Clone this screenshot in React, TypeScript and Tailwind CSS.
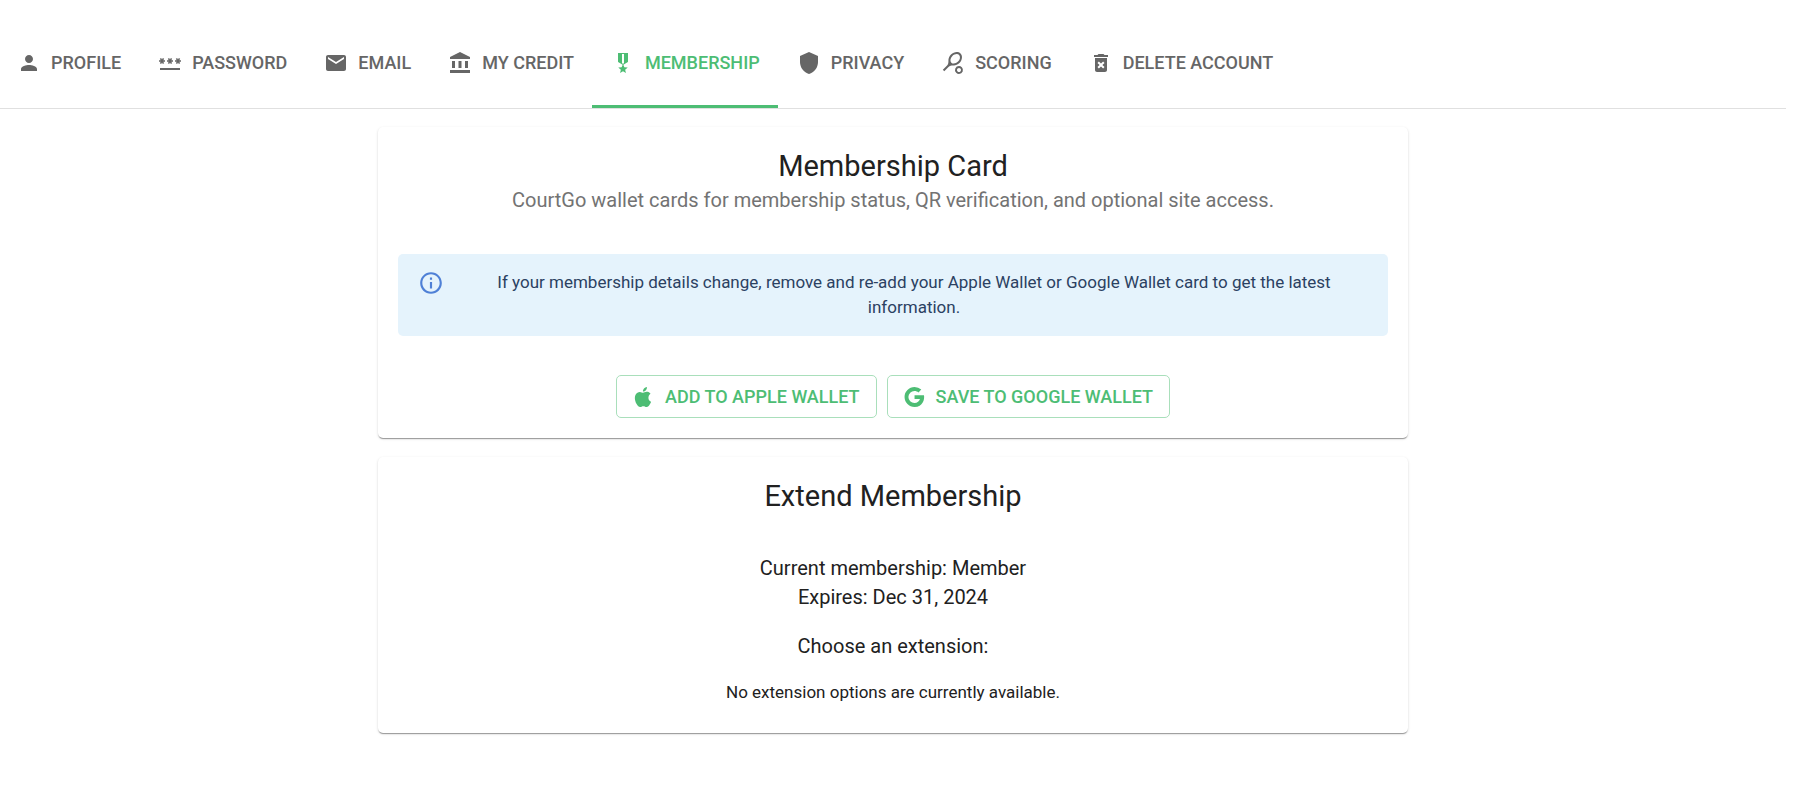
import { useState } from 'react';
import type { ReactNode } from 'react';
import {
  MdAccountBalance,
  MdDeleteForever,
  MdEmail,
  MdInfoOutline,
  MdMilitaryTech,
  MdPassword,
  MdPerson,
  MdShield,
  MdSportsTennis,
} from 'react-icons/md';

const tabs = [
  { id: 'profile', label: 'Profile', Icon: MdPerson },
  { id: 'password', label: 'Password', Icon: MdPassword },
  { id: 'email', label: 'Email', Icon: MdEmail },
  { id: 'credit', label: 'My Credit', Icon: MdAccountBalance },
  { id: 'membership', label: 'Membership', Icon: MdMilitaryTech },
  { id: 'privacy', label: 'Privacy', Icon: MdShield },
  { id: 'scoring', label: 'Scoring', Icon: MdSportsTennis },
  { id: 'delete', label: 'Delete Account', Icon: MdDeleteForever },
];

function AppleIcon() {
  return (
    <svg viewBox="0 0 24 24" className="size-6" fill="currentColor" aria-hidden="true">
      <path d="M18.71 19.5c-.83 1.24-1.71 2.45-3.05 2.47-1.34.03-1.77-.79-3.29-.79-1.53 0-2 .77-3.27.82-1.31.05-2.3-1.32-3.14-2.53C4.25 17 2.94 12.45 4.7 9.39c.87-1.52 2.43-2.48 4.12-2.51 1.28-.02 2.5.87 3.29.87.78 0 2.26-1.07 3.81-.91.65.03 2.47.26 3.64 1.98-.09.06-2.17 1.28-2.15 3.81.03 3.02 2.65 4.03 2.68 4.04-.03.07-.42 1.44-1.38 2.83M13 3.5c.73-.83 1.94-1.46 2.94-1.5.13 1.17-.34 2.35-1.04 3.19-.69.85-1.83 1.51-2.95 1.42-.15-1.15.41-2.35 1.05-3.11z" />
    </svg>
  );
}

function GoogleIcon() {
  return (
    <svg viewBox="0 0 24 24" className="size-6" fill="currentColor" aria-hidden="true">
      <path d="M12.545 10.239v3.821h5.445c-.712 2.315-2.647 3.972-5.445 3.972a6.033 6.033 0 1 1 0-12.064c1.498 0 2.866.549 3.921 1.453l2.814-2.814A9.969 9.969 0 0 0 12.545 2C7.021 2 2.543 6.477 2.543 12s4.478 10 10.002 10c8.396 0 10.249-7.85 9.426-11.748z" />
    </svg>
  );
}

function Card({ title, children }: { title: string; children: ReactNode }) {
  return (
    <section className="rounded-[5px] bg-white p-5 text-center shadow-[0_2px_1px_-1px_rgba(0,0,0,0.24),0_1px_1px_0_rgba(0,0,0,0.14),0_1px_3px_0_rgba(0,0,0,0.12)]">
      <h2 className="text-[29px] leading-[39px]">{title}</h2>
      {children}
    </section>
  );
}

function WalletButton({ icon, children }: { icon: ReactNode; children: ReactNode }) {
  return (
    <button
      type="button"
      className="flex h-[43px] items-center gap-2.5 rounded-[5px] border border-[#a9dfbb] pr-4 pl-3.5 text-[18px] font-medium text-[#4dbd74] uppercase transition-colors hover:bg-[#4dbd74]/5"
    >
      {icon}
      {children}
    </button>
  );
}

export default function App() {
  const [active, setActive] = useState('membership');

  return (
    <div className="min-h-screen bg-white pt-5 pr-3.5 font-[Roboto,sans-serif] text-[#212121]">
      <div role="tablist" className="flex border-b border-[#e0e0e0]">
        {tabs.map(({ id, label, Icon }) => (
          <button
            key={id}
            type="button"
            role="tab"
            aria-selected={active === id}
            onClick={() => setActive(id)}
            className={`flex h-[88px] items-center gap-2.5 border-b-3 pr-[18px] pl-[19px] text-[18px] font-medium whitespace-nowrap uppercase first:pl-[17px] ${
              active === id ? 'border-[#4dbd74] text-[#4dbd74]' : 'border-transparent text-[#666666]'
            }`}
          >
            <Icon className="size-6" />
            {label}
          </button>
        ))}
      </div>

      <main className="mx-auto mt-[18px] flex max-w-[1030px] flex-col gap-[19px]">
        <Card title="Membership Card">
          <p className="text-[20px] leading-[29px] text-[#737373]">
            CourtGo wallet cards for membership status, QR verification, and optional site access.
          </p>
          <div role="alert" className="mt-[39px] flex gap-4 rounded-[5px] bg-[#e5f3fc] px-5 py-4 text-[17px] leading-[25px] text-[#2b4162]">
            <MdInfoOutline className="size-[26px] shrink-0 text-[#4f80d6]" />
            <p className="grow">
              If your membership details change, remove and re-add your Apple Wallet or Google Wallet card to get the
              latest information.
            </p>
          </div>
          <div className="mt-[39px] flex justify-center gap-2.5">
            <WalletButton icon={<AppleIcon />}>Add to Apple Wallet</WalletButton>
            <WalletButton icon={<GoogleIcon />}>Save to Google Wallet</WalletButton>
          </div>
        </Card>

        <Card title="Extend Membership">
          <div className="mt-[38px] text-[20px] leading-[29px]">
            <p>Current membership: Member</p>
            <p>Expires: Dec 31, 2024</p>
            <p className="mt-5">Choose an extension:</p>
          </div>
          <p className="mt-[19px] mb-2 text-[17px] leading-[25px]">No extension options are currently available.</p>
        </Card>
      </main>
    </div>
  );
}
